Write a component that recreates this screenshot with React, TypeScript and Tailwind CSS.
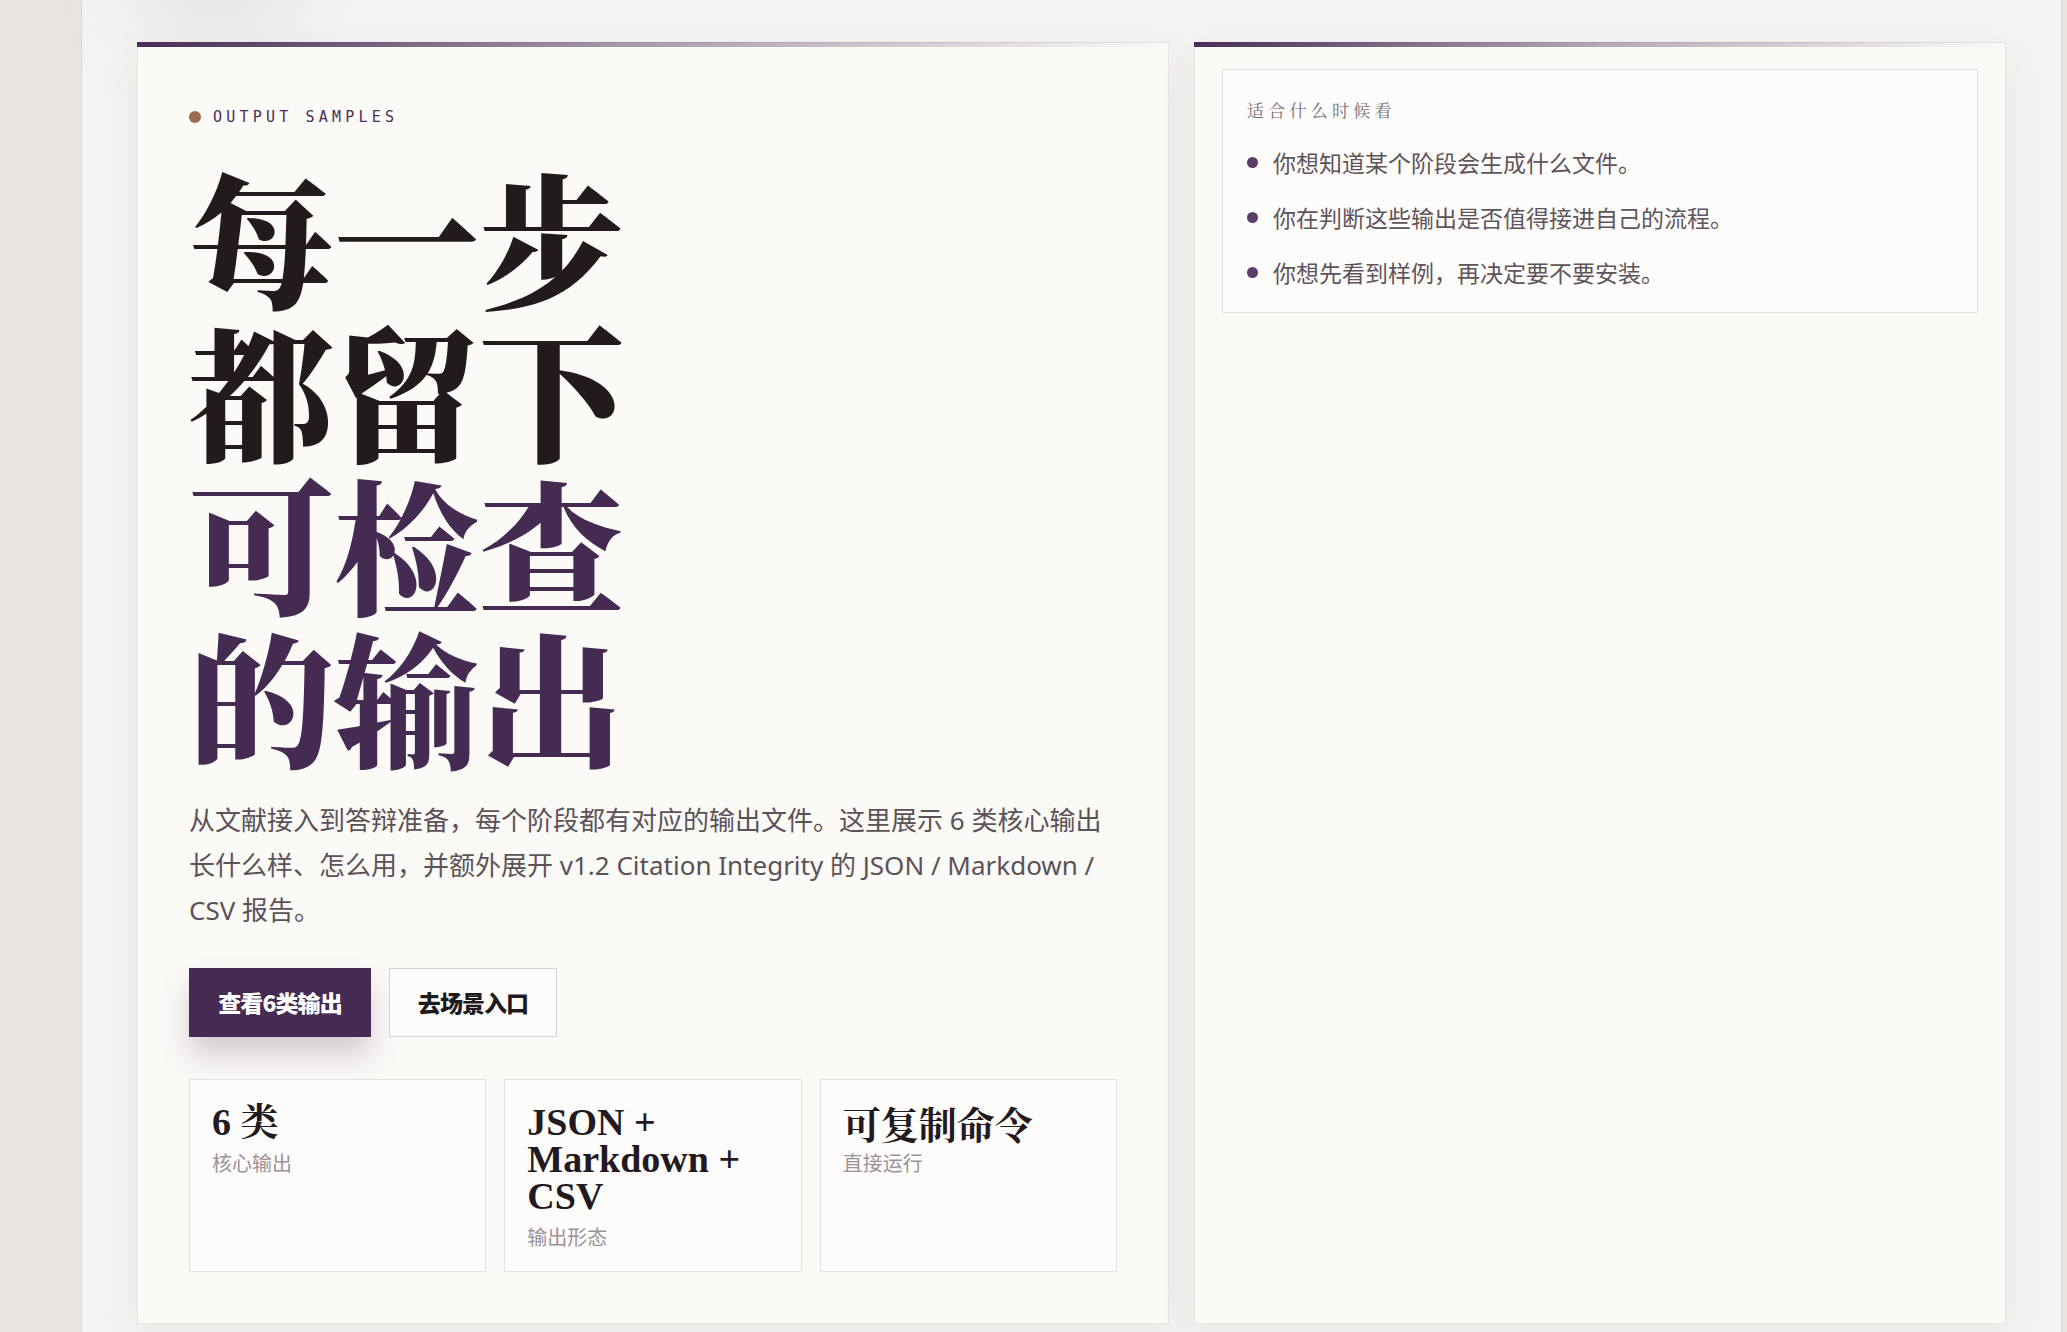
import React from "react";

const serifCJK = '"Noto Serif CJK SC", "Noto Sans CJK SC", serif';

function StatCard({ title, sub, cjk }: { title: string; sub: string; cjk?: boolean }) {
  return (
    <div className="flex flex-col border border-[#e6e0df] bg-[#fefcfb] px-[22px] pb-[20px] pt-[24px]">
      <div
        className="text-[38px] font-bold leading-[37px] text-[#221a20]"
        style={{ fontFamily: cjk ? '"Noto Serif CJK SC", "Noto Sans CJK SC", serif' : '"Liberation Serif", "Noto Serif CJK SC", serif' }}
      >
        {title}
      </div>
      <div className="mt-[8px] text-[20px] leading-[28px] text-[#9b9199]" style={{ fontFamily: '"Noto Sans CJK SC", sans-serif' }}>
        {sub}
      </div>
    </div>
  );
}

export default function App() {
  return (
    <div className="flex h-[1332px] w-full overflow-hidden bg-[#e8e4e2]">
      <div className="w-[82px] shrink-0 border-r border-[#dcd6d4] bg-[#e8e4e2]" />
      <main className="relative min-w-0 flex-1 bg-[#f4f3f2] px-[55px] pt-[42px]">
        <div className="pointer-events-none absolute left-[60px] top-[-70px] h-[100px] w-[150px] rounded-full bg-[#dcd8da] opacity-70 blur-2xl" />
        <div className="relative grid h-[1282px] grid-cols-[1032px_812px] gap-[25px]">
          {/* Left card */}
          <section className="flex flex-col border border-[#e9e4e2] bg-[#fcfaf7] shadow-[0_12px_40px_rgba(70,45,80,0.06)]">
            <div className="-mx-px -mt-px h-[5px] bg-gradient-to-r from-[#4a2d57] via-[#4a2d57]/45 to-transparent" />
            <div className="flex flex-col px-[51px] pt-[58px]">
              <div className="flex h-[24px] items-center gap-[12px]">
                <span className="h-[12px] w-[12px] rounded-full bg-[#9b6c4b]" />
                <span
                  className="text-[15px] tracking-[0.28em] text-[#4a2d57]"
                  style={{ fontFamily: '"DejaVu Sans Mono", "Liberation Mono", monospace' }}
                >
                  OUTPUT SAMPLES
                </span>
              </div>
              <h1
                className="mt-[30px] text-[145px] font-black leading-[153px]"
                style={{ fontFamily: serifCJK }}
              >
                <span className="block text-[#231a20]">每一步</span>
                <span className="block text-[#231a20]">都留下</span>
                <span className="block text-[#452a52]">可检查</span>
                <span className="block text-[#452a52]">的输出</span>
              </h1>
              <p
                className="mt-[27px] text-[26px] leading-[45px] text-[#5b5258]"
                style={{ fontFamily: '"Noto Sans", "Noto Sans CJK SC", sans-serif' }}
              >
                从文献接入到答辩准备，每个阶段都有对应的输出文件。这里展示 6 类核心输出长什么样、怎么用，并额外展开 v1.2 Citation Integrity 的 JSON / Markdown / CSV 报告。
              </p>
              <div className="mt-[35px] flex gap-[18px]" style={{ fontFamily: '"Noto Sans CJK SC", sans-serif' }}>
                <button className="h-[69px] w-[182px] bg-[#452a52] text-[23px] font-black tracking-[-0.04em] text-white shadow-[0_18px_30px_rgba(69,42,82,0.22)]">
                  查看6类输出
                </button>
                <button className="h-[69px] w-[168px] border border-[#d9d2d5] bg-[#fefcfb] text-[23px] font-black tracking-[-0.04em] text-[#1f1a1e]">
                  去场景入口
                </button>
              </div>
              <div className="mt-[42px] grid h-[193px] grid-cols-3 gap-[18px]">
                <StatCard title="6 类" sub="核心输出" />
                <StatCard title="JSON + Markdown + CSV" sub="输出形态" />
                <StatCard title="可复制命令" sub="直接运行" cjk />
              </div>
            </div>
          </section>

          {/* Right card */}
          <section className="flex flex-col border border-[#e9e4e2] bg-[#fcfaf7] shadow-[0_12px_40px_rgba(70,45,80,0.06)]">
            <div className="-mx-px -mt-px h-[5px] bg-gradient-to-r from-[#4a2d57] via-[#4a2d57]/40 to-transparent" />
            <div className="px-[27px] pt-[22px]">
              <div className="border border-[#e6e0df] bg-[#fefcfb] px-[24px] pb-[21px] pt-[28px]">
                <div
                  className="text-[17px] leading-[24px] tracking-[0.25em] text-[#7b6f78]"
                  style={{ fontFamily: serifCJK }}
                >
                  适合什么时候看
                </div>
                <ul
                  className="mt-[22px] flex flex-col gap-[18px] text-[23px] leading-[37px] text-[#5e545b]"
                  style={{ fontFamily: '"Noto Sans CJK SC", sans-serif' }}
                >
                  {[
                    "你想知道某个阶段会生成什么文件。",
                    "你在判断这些输出是否值得接进自己的流程。",
                    "你想先看到样例，再决定要不要安装。",
                  ].map((t) => (
                    <li key={t} className="flex items-center gap-[15px]">
                      <span className="h-[11px] w-[11px] shrink-0 rounded-full bg-[#5b3d68]" />
                      <span>{t}</span>
                    </li>
                  ))}
                </ul>
              </div>
            </div>
          </section>
        </div>
      </main>
      <div className="w-[6px] shrink-0 border-l border-[#dcd6d4] bg-[#e8e4e2]" />
    </div>
  );
}
